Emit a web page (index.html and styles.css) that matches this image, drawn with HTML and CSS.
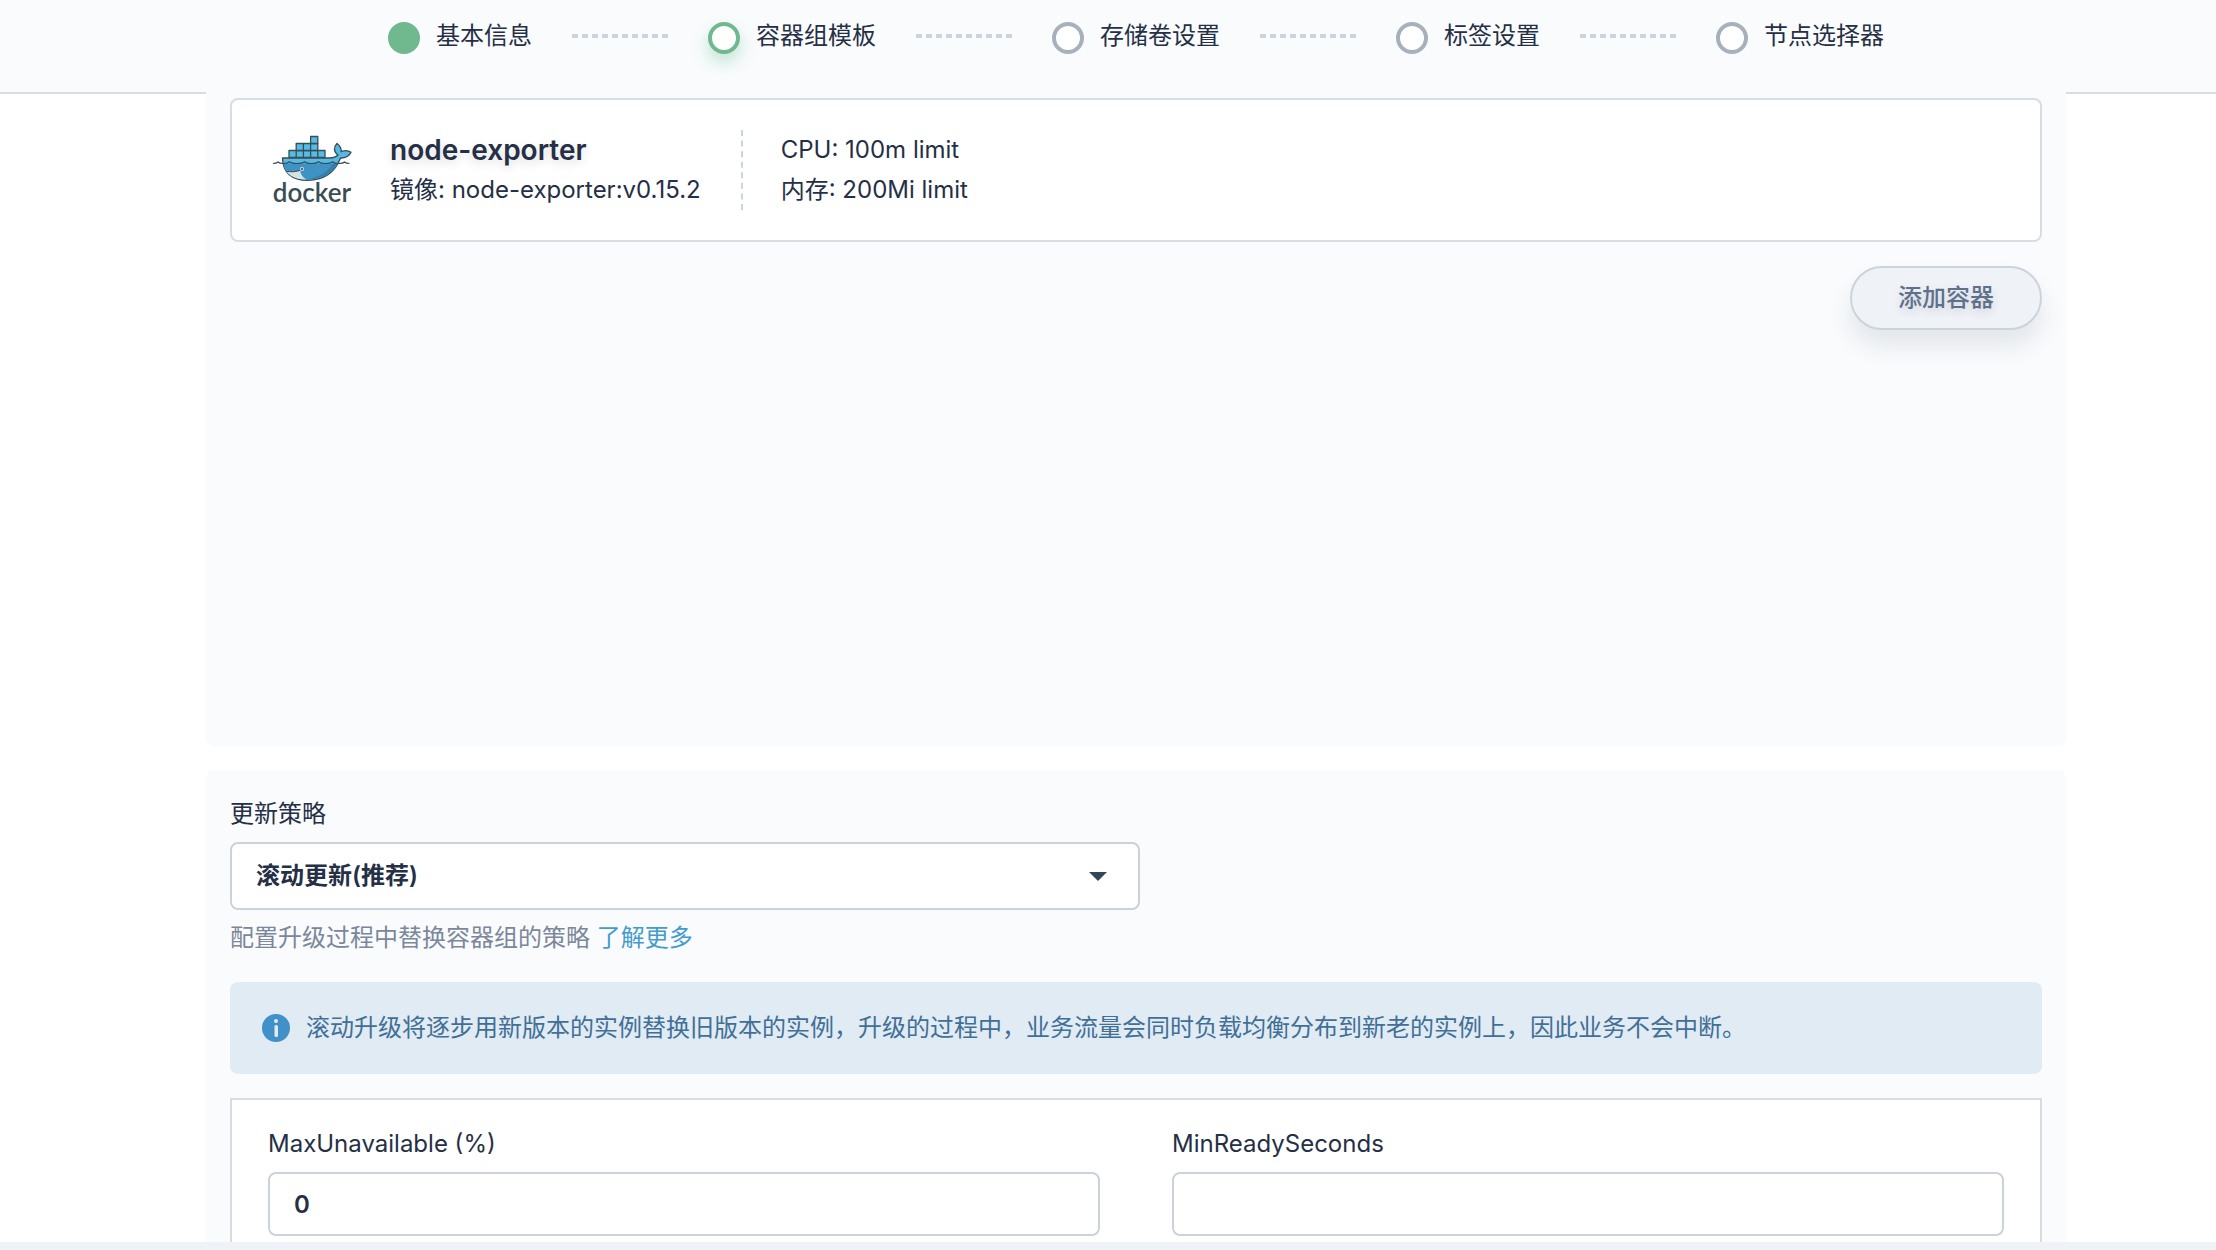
FILE: index.html
```html
<!DOCTYPE html>
<html lang="zh-CN">
<head>
<meta charset="utf-8">
<meta name="viewport" content="width=device-width, initial-scale=1">
<title>容器组模板</title>
<link rel="stylesheet" href="styles.css">
</head>
<body>
<div class="app">
  <header class="header">
    <ol class="steps">
      <li class="step done"><span class="dot"></span><span class="step-name">基本信息</span></li>
      <li class="step current" aria-current="step"><span class="dot"></span><span class="step-name">容器组模板</span></li>
      <li class="step"><span class="dot"></span><span class="step-name">存储卷设置</span></li>
      <li class="step"><span class="dot"></span><span class="step-name">标签设置</span></li>
      <li class="step"><span class="dot"></span><span class="step-name">节点选择器</span></li>
    </ol>
  </header>

  <main class="main">
    <section class="panel containers">
      <article class="card">
        <svg class="logo" viewBox="0 4 80 80" role="img" aria-label="docker">
          <g stroke="#394d54" stroke-width="1.3" stroke-linejoin="round">
            <g fill="#55bce7">
              <path d="M17 24.5h7.2v7H17zM24.2 24.5h7.2v7h-7.2zM31.4 24.5h7.2v7h-7.2zM38.6 24.5h7.2v7h-7.2zM45.8 24.5H53v7h-7.2z"/>
              <path d="M24.2 17.500h7.2v7h-7.2zM31.400 17.500h7.200v7h-7.200zM38.600 17.500h7.200v7h-7.200z"/>
              <path d="M38.600 10.500h7.200v7h-7.200z"/>
            </g>
            <path fill="#55b9e6" d="M10.500 32H57c4-.2 7.500-1.200 9-3-4.500-3-4.500-8-1-11.500 3.500 2.800 4.500 5.300 4.200 8.200 3.500-1.500 7-1.300 9.800.6-1.800 4-5.500 5.800-10.500 5.700C62.500 47.500 51 54.300 35.500 54.300c-15.500 0-24.800-7.600-25-22.300z"/>
          </g>
          <path fill="#3e93c4" d="M11.300 37.500h54.200C59.800 48 49.500 53.600 35.500 53.600c-14 0-22.200-5-24.200-16.100z"/>
          <path fill="#357fae" d="M65.500 37.500C59.800 48 49.500 53.600 35.500 53.600 49 50 57 45 60.500 37.500z"/>
          <path fill="#d5e1e5" d="M14.500 45.300c5 .8 9.500.6 13.500-1 .5 4 2.500 7.200 6.500 9.200-9.500.1-16.300-2.800-20-8.200z"/>
          <path fill="none" stroke="#394d54" d="M14.500 45.300c5 .8 9.500.6 13.500-1"/>
          <circle cx="30" cy="43" r="2" fill="#d5e1e5"/><circle cx="30" cy="43" r="1.100" fill="#394d54"/>
          <path fill="none" stroke="#394d54" stroke-width="1.200" d="M1 37.500c3 0 4-.6 5-1.500 1 1 2 1.500 5 1.500s5-.5 6.500-1.800c1.500 1.300 3.500 1.800 7.500 1.800s6-.5 7.500-1.800c1.500 1.300 3.500 1.800 7 1.800s5.500-.5 7-1.800c1.500 1.300 3.500 1.800 6.500 1.800s6-.5 7.500-1.800c1.500 1.300 3.500 1.800 6 1.800s5-.5 6-1.500c1 .9 2 1.500 5 1.500"/>
          <text class="logo-word" x="40" y="76" text-anchor="middle">docker</text>
        </svg>
        <div class="info">
          <h2 class="name">node-exporter</h2>
          <p class="line">镜像: node-exporter:v0.15.2</p>
        </div>
        <div class="limits">
          <p class="line">CPU: 100m limit</p>
          <p class="line">内存: 200Mi limit</p>
        </div>
      </article>
      <button class="add" type="button">添加容器</button>
    </section>

    <section class="panel strategy">
      <label class="label" for="strategy">更新策略</label>
      <div class="select-wrap">
        <select class="control" id="strategy">
          <option>滚动更新(推荐)</option>
        </select>
        <svg class="arrow" viewBox="0 0 18 9" aria-hidden="true"><path fill="#32465a" d="M0 0h18L9 9z"/></svg>
      </div>
      <p class="help">配置升级过程中替换容器组的策略 <a class="more" href="#">了解更多</a></p>
      <div class="notice">
        <svg class="notice-icon" viewBox="0 0 28 28" aria-hidden="true">
          <circle cx="14" cy="14" r="14" fill="#4190c8"/>
          <circle cx="14" cy="7" r="2" fill="#e0ebf4"/>
          <rect x="12.500" y="11" width="3.500" height="12" rx="1.500" fill="#e0ebf4"/>
        </svg>
        <p class="notice-text">滚动升级将逐步用新版本的实例替换旧版本的实例，升级的过程中，业务流量会同时负载均衡分布到新老的实例上，因此业务不会中断。</p>
      </div>
      <div class="fields">
        <div class="field">
          <label class="label" for="max">MaxUnavailable (%)</label>
          <input class="control" id="max" type="text" value="0">
        </div>
        <div class="field">
          <label class="label" for="min">MinReadySeconds</label>
          <input class="control" id="min" type="text">
        </div>
      </div>
    </section>
  </main>
  <footer class="footer"></footer>
</div>
</body>
</html>
```
FILE: styles.css
```css
* {
  box-sizing: border-box;
}

body {
  margin: 0;
  background: #fff;
  color: #252f45;
  font: 24px/40px Inter, "Noto Sans CJK SC", sans-serif;
}

h2,
p,
ol {
  margin: 0;
  padding: 0;
}

.app {
  display: flex;
  flex-direction: column;
  height: 100vh;
  overflow: hidden;
}

.header {
  flex: none;
  padding: 16px 150px 36px 206px;
  background: #f9fbfd;
  border-bottom: 2px solid #d8dde4;
}

.steps {
  display: flex;
  justify-content: center;
  list-style: none;
}

.step {
  display: flex;
  align-items: center;
  white-space: nowrap;
}

.step + .step::before {
  content: "";
  width: 96px;
  height: 4px;
  margin: 0 40px;
  background: repeating-linear-gradient(90deg, #ccd3db 0 6px, transparent 6px 10px);
}

.dot {
  width: 32px;
  height: 32px;
  margin: 4px 16px 0 0;
  border: 4px solid #a7b0bd;
  border-radius: 50%;
  background: #fff;
}

.done .dot {
  border-color: #70b88d;
  background: #70b88d;
}

.current .dot {
  border-color: #70b88d;
  box-shadow: 0 8px 16px rgba(85, 188, 138, 0.35);
}

.main {
  flex: 1;
  min-height: 0;
  padding: 0 150px 0 206px;
}

.panel {
  position: relative;
  margin-bottom: 24px;
  padding: 24px;
  border-radius: 8px;
  background: #f9fbfd;
}

.containers {
  min-height: 672px;
  margin-top: -20px;
  display: flex;
  flex-direction: column;
  gap: 24px;
}

.card {
  display: flex;
  padding: 30px 40px;
  background: #fff;
  border: 2px solid #d8dde4;
  border-radius: 8px;
}

.logo {
  width: 80px;
  height: 80px;
  margin-right: 38px;
  overflow: visible;
}

.logo-word {
  font: 600 26px Lato, sans-serif;
  fill: #394d54;
}

.info {
  padding-right: 40px;
}

.limits {
  padding-left: 38px;
  border-left: 2px dashed #ccd3db;
}

.name {
  font-size: 28px;
  font-weight: 600;
  line-height: 40px;
  text-shadow: 0 4px 8px rgba(37, 47, 69, 0.15);
}

.add {
  align-self: flex-end;
  height: 64px;
  padding: 0 46px;
  background: #eff3f8;
  border: 2px solid #ccd3db;
  border-radius: 32px;
  box-shadow: 0 16px 24px rgba(35, 45, 65, 0.1);
  color: #5f708a;
  font: inherit;
  font-weight: 500;
  text-shadow: 0 4px 8px rgba(37, 47, 69, 0.15);
}

.label {
  display: block;
  margin-bottom: 8px;
}

.control {
  display: block;
  width: 100%;
  height: 64px;
  padding: 0 24px;
  appearance: none;
  background: #fff;
  border: 2px solid #ccd2dc;
  border-radius: 8px;
  color: #252f45;
  font: inherit;
  font-weight: 600;
}

.select-wrap {
  position: relative;
  width: calc(50% + 4px);
}

.select-wrap .control {
  height: 68px;
}

.arrow {
  position: absolute;
  top: 30px;
  right: 33px;
  width: 18px;
  height: 9px;
  pointer-events: none;
}

.help {
  margin: 8px 0 24px;
  color: #7b879b;
}

.more {
  color: #459bcd;
  text-decoration: none;
}

.notice {
  display: flex;
  align-items: center;
  gap: 16px;
  padding: 26px 32px;
  border-radius: 8px;
  background: #e0ebf4;
  color: #426f96;
}

.notice-icon {
  flex: none;
  width: 28px;
  height: 28px;
}

.fields {
  display: grid;
  grid-template-columns: 1fr 1fr;
  gap: 72px;
  margin-top: 24px;
  padding: 24px 36px;
  border: 2px solid #d8dde4;
  background: #fff;
}

.footer {
  position: relative;
  flex: none;
  height: 8px;
  background: #eff3f8;
}
```
